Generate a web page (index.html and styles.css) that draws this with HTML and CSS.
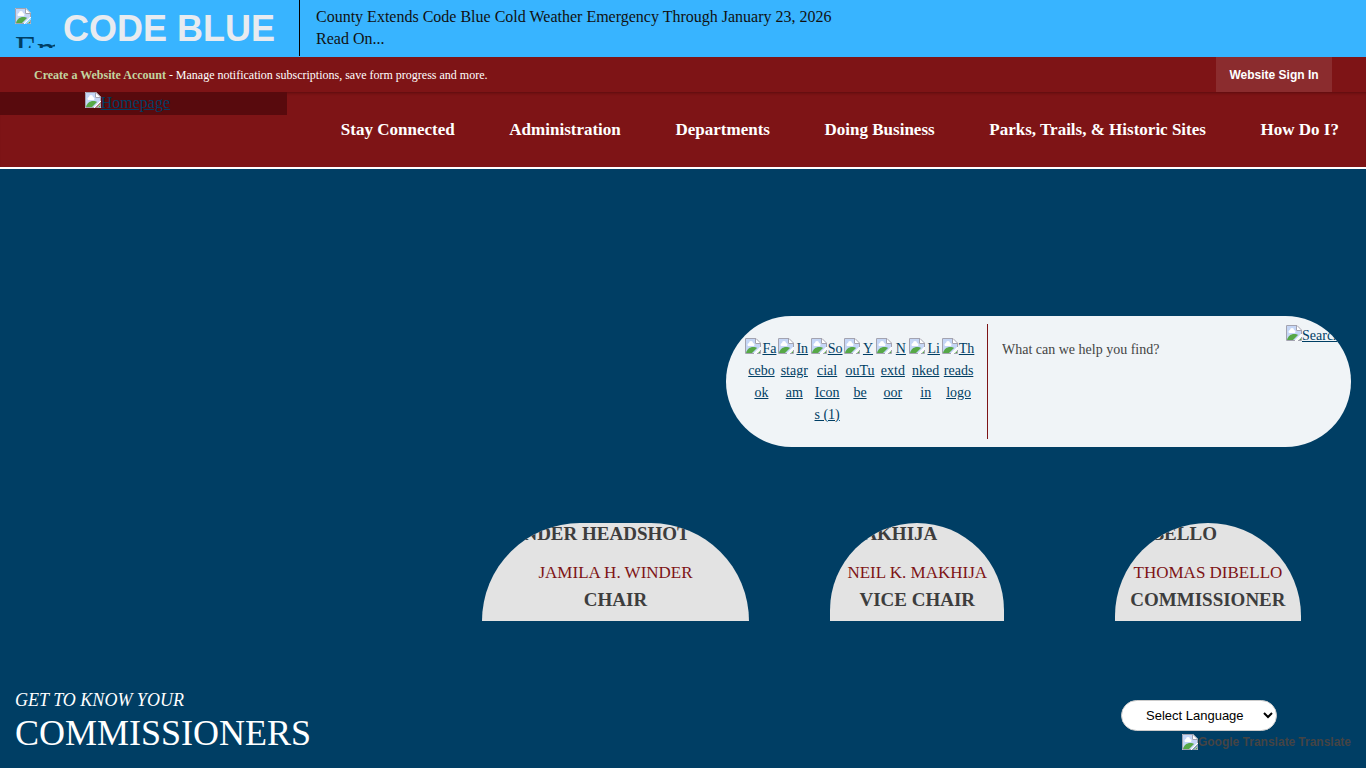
FILE: index.html
```html
<!DOCTYPE html>
<html lang="en">
<head>
  <meta charset="UTF-8">
  <title>County Homepage</title>
  <meta name="viewport" content="width=device-width, initial-scale=1">
  <link rel="stylesheet" href="styles.css">
</head>
<body>

  <svg class="sprite" aria-hidden="true">
    <symbol id="broken" viewBox="0 0 16 16">
      <path d="M0 0h11l5 5v5l-6 6H0z" fill="#fff"/>
      <path d="M1 1h9v5h5v3L9 15H1z" fill="#c5d6f6"/>
      <path d="M3 8a2 2 0 0 1 1-3 2 2 0 0 1 4 0 2 2 0 0 1 1 3z" fill="#fff"/>
      <path d="M1 15c1-4 4-6 7-6 2 0 3 0 4 1l-5 5z" fill="#56a846"/>
      <path d="M16 11v5h-5z" fill="#fff"/>
      <path d="M15 13v2h-2z" fill="#56a846"/>
      <path d="M.5 15.500V.5H11L15.500 5V9M15.500 12v3.500H12M.5 15.500H9M10.500 .5V5.500h5" fill="none" stroke="#a3a3b0"/>
    </symbol>
  </svg>

  <section class="alert">
    <div class="alert-title">
      <span class="alert-icon"><svg class="broken"><use href="#broken"/></svg><span>Em</span></span>
      <h2>CODE BLUE</h2>
    </div>
    <div class="alert-text">
      <a href="#">County Extends Code Blue Cold Weather Emergency Through January 23, 2026</a>
      <a href="#">Read On...</a>
    </div>
  </section>

  <div class="account">
    <p><a href="#">Create a Website Account</a> - Manage notification subscriptions, save form progress and more.</p>
    <button type="button">Website Sign In</button>
  </div>

  <header class="header">
    <a class="logo" href="#"><svg class="broken"><use href="#broken"/></svg>Homepage</a>
    <nav class="menu">
      <a href="#">Stay Connected</a>
      <a href="#">Administration</a>
      <a href="#">Departments</a>
      <a href="#">Doing Business</a>
      <a href="#">Parks, Trails, &amp; Historic Sites</a>
      <a href="#">How Do I?</a>
    </nav>
  </header>

  <main>
    <div class="search-box">
      <div class="social">
        <a href="#"><svg class="broken"><use href="#broken"/></svg>Fa<br>cebo<br>ok</a>
        <a href="#"><svg class="broken"><use href="#broken"/></svg>In<br>stagr<br>am</a>
        <a href="#"><svg class="broken"><use href="#broken"/></svg>So<br>cial<br>Icon<br>s (1)</a>
        <a href="#"><svg class="broken"><use href="#broken"/></svg>Y<br>ouTu<br>be</a>
        <a href="#"><svg class="broken"><use href="#broken"/></svg>N<br>extd<br>oor</a>
        <a href="#"><svg class="broken"><use href="#broken"/></svg>Li<br>nked<br>in</a>
        <a href="#"><svg class="broken"><use href="#broken"/></svg>Th<br>reads<br>logo</a>
      </div>
      <form class="search">
        <input type="text" aria-label="Search" placeholder="What can we help you find?">
        <a href="#"><svg class="broken"><use href="#broken"/></svg>Search</a>
      </form>
    </div>

    <div class="people">
      <div class="person wide">
        <h3>WINDER HEADSHOT</h3>
        <a href="#">JAMILA H. WINDER</a>
        <strong>CHAIR</strong>
      </div>
      <div class="person">
        <h3>MAKHIJA</h3>
        <a href="#">NEIL K. MAKHIJA</a>
        <strong>VICE CHAIR</strong>
      </div>
      <div class="person">
        <h3>DIBELLO</h3>
        <a href="#">THOMAS DIBELLO</a>
        <strong>COMMISSIONER</strong>
      </div>
    </div>

    <div class="bottom">
      <h1><em>GET TO KNOW YOUR</em>COMMISSIONERS</h1>
      <div class="translate">
        <select aria-label="Select Language">
          <option>Select Language</option>
        </select>
        <p><svg class="broken"><use href="#broken"/></svg><span>Google Translate</span> Translate</p>
      </div>
    </div>
  </main>

</body>
</html>
```
FILE: styles.css
```css
* {
  box-sizing: border-box;
}
body {
  margin: 0;
  font-family: "Liberation Serif", serif;
  font-size: 16px;
  line-height: 22px;
  color: #3d3d3d;
  background: #003e64;
}
h1, h2, h3, p {
  margin: 0;
}
a {
  color: #003e64;
}
.sprite {
  display: none;
}
.broken {
  width: 16px;
  height: 16px;
}

/* alert */
.alert {
  display: flex;
  height: 57px;
  background: #38b4ff;
}
.alert-title {
  display: flex;
  align-items: center;
  gap: 8px;
  width: 300px;
  height: 56px;
  padding-left: 15px;
  border-right: 1px solid #000;
}
.alert-icon {
  width: 40px;
  height: 40px;
  overflow: hidden;
  font-size: 36px;
  line-height: 36px;
  color: #003e64;
}
.alert-icon svg,
.alert-icon span {
  display: block;
}
.alert-icon span {
  padding-top: 7px;
}
.alert h2 {
  padding-top: 2px;
  font-family: "Liberation Sans", sans-serif;
  font-size: 36px;
  line-height: 40px;
  color: #e8ebf0;
}
.alert-text {
  padding: 6px 16px;
}
.alert-text a {
  display: block;
  color: #111;
  text-decoration: none;
}

/* account bar */
.account {
  display: flex;
  justify-content: space-between;
  align-items: center;
  height: 35px;
  padding: 0 34px;
  font-size: 12px;
  color: #fff;
  background: #7e1416;
}
.account a {
  font-weight: bold;
  color: #c2d5a0;
  text-decoration: none;
}
.account button {
  width: 116px;
  height: 35px;
  padding: 0;
  border: none;
  font: bold 12px "Liberation Sans", sans-serif;
  color: #fff;
  background: #8b2c2e;
}

/* header */
.header {
  display: flex;
  align-items: flex-start;
  height: 77px;
  border-bottom: 2px solid #fff;
  background: #7e1416;
  box-shadow: inset 0 3px 3px -2px #5c0c0e;
}
.logo {
  flex: none;
  display: flex;
  justify-content: center;
  width: 21%;
  height: 23px;
  padding-right: 32px;
  background: #580a0d;
}
.menu {
  flex: 1;
  display: flex;
  justify-content: space-between;
  padding: 27px 27px 0 54px;
}
.menu a {
  font-size: 17px;
  font-weight: bold;
  color: #fff;
  text-decoration: none;
}

/* search */
.search-box {
  display: flex;
  width: 625px;
  height: 131px;
  margin: 147px 15px 0 auto;
  padding: 8px 12px 8px 19px;
  border-radius: 66px;
  overflow: hidden;
  font-size: 14px;
  background: #f0f4f7;
}
.social {
  display: grid;
  grid-template-columns: repeat(7, 1fr);
  width: 243px;
  padding: 14px 12px 0 0;
  border-right: 1px solid #7e1416;
}
.social a {
  text-align: center;
  white-space: nowrap;
}
.social svg {
  float: left;
}
.search {
  flex: 1;
  display: flex;
  align-items: flex-start;
}
.search input {
  flex: 1;
  height: 36px;
  margin-top: 8px;
  padding: 0 14px;
  border: none;
  font: 14px "Liberation Serif", serif;
  color: #444;
  background: none;
}
.search input::placeholder {
  color: #444;
}
.search a {
  display: flex;
  width: 53px;
  padding-top: 1px;
  white-space: nowrap;
}
.search a svg {
  flex: none;
}

/* commissioners */
.people {
  display: grid;
  grid-template-columns: 301fr 300fr 279fr;
  justify-items: center;
  margin: 76px 18px 0 34%;
}
.person {
  height: 98px;
  padding: 0 15px;
  border-radius: 100px 100px 0 0;
  overflow: hidden;
  font-size: 19px;
  text-align: center;
  background: #e3e3e3;
}
.wide {
  width: 267px;
}
.person h3 {
  font-size: 19px;
  line-height: 22px;
  text-align: left;
}
.person a {
  display: block;
  padding: 17px 2px 0;
  font-size: 17px;
  color: #7e1416;
  text-decoration: none;
}
.person strong {
  display: block;
  padding-top: 5px;
}

/* bottom */
.bottom {
  display: flex;
  justify-content: space-between;
  padding: 68px 15px 16px;
}
.bottom h1 {
  font-size: 36px;
  font-weight: normal;
  line-height: 44px;
  color: #fff;
}
.bottom em {
  display: block;
  font-size: 18px;
  line-height: 22px;
}
.translate {
  padding-top: 11px;
  font-family: "Liberation Sans", sans-serif;
  font-size: 12px;
  font-weight: bold;
  color: #444;
}
.translate select {
  display: block;
  width: 156px;
  height: 31px;
  margin-right: 74px;
  padding-left: 20px;
  border: 1px solid #ccc;
  border-radius: 16px;
  font: 13px "Liberation Sans", sans-serif;
  color: #000;
  background: #fff;
}
.translate p {
  display: flex;
  justify-content: flex-end;
  padding-top: 3px;
  line-height: 16px;
}
.translate span {
  margin-right: 3px;
}
```
